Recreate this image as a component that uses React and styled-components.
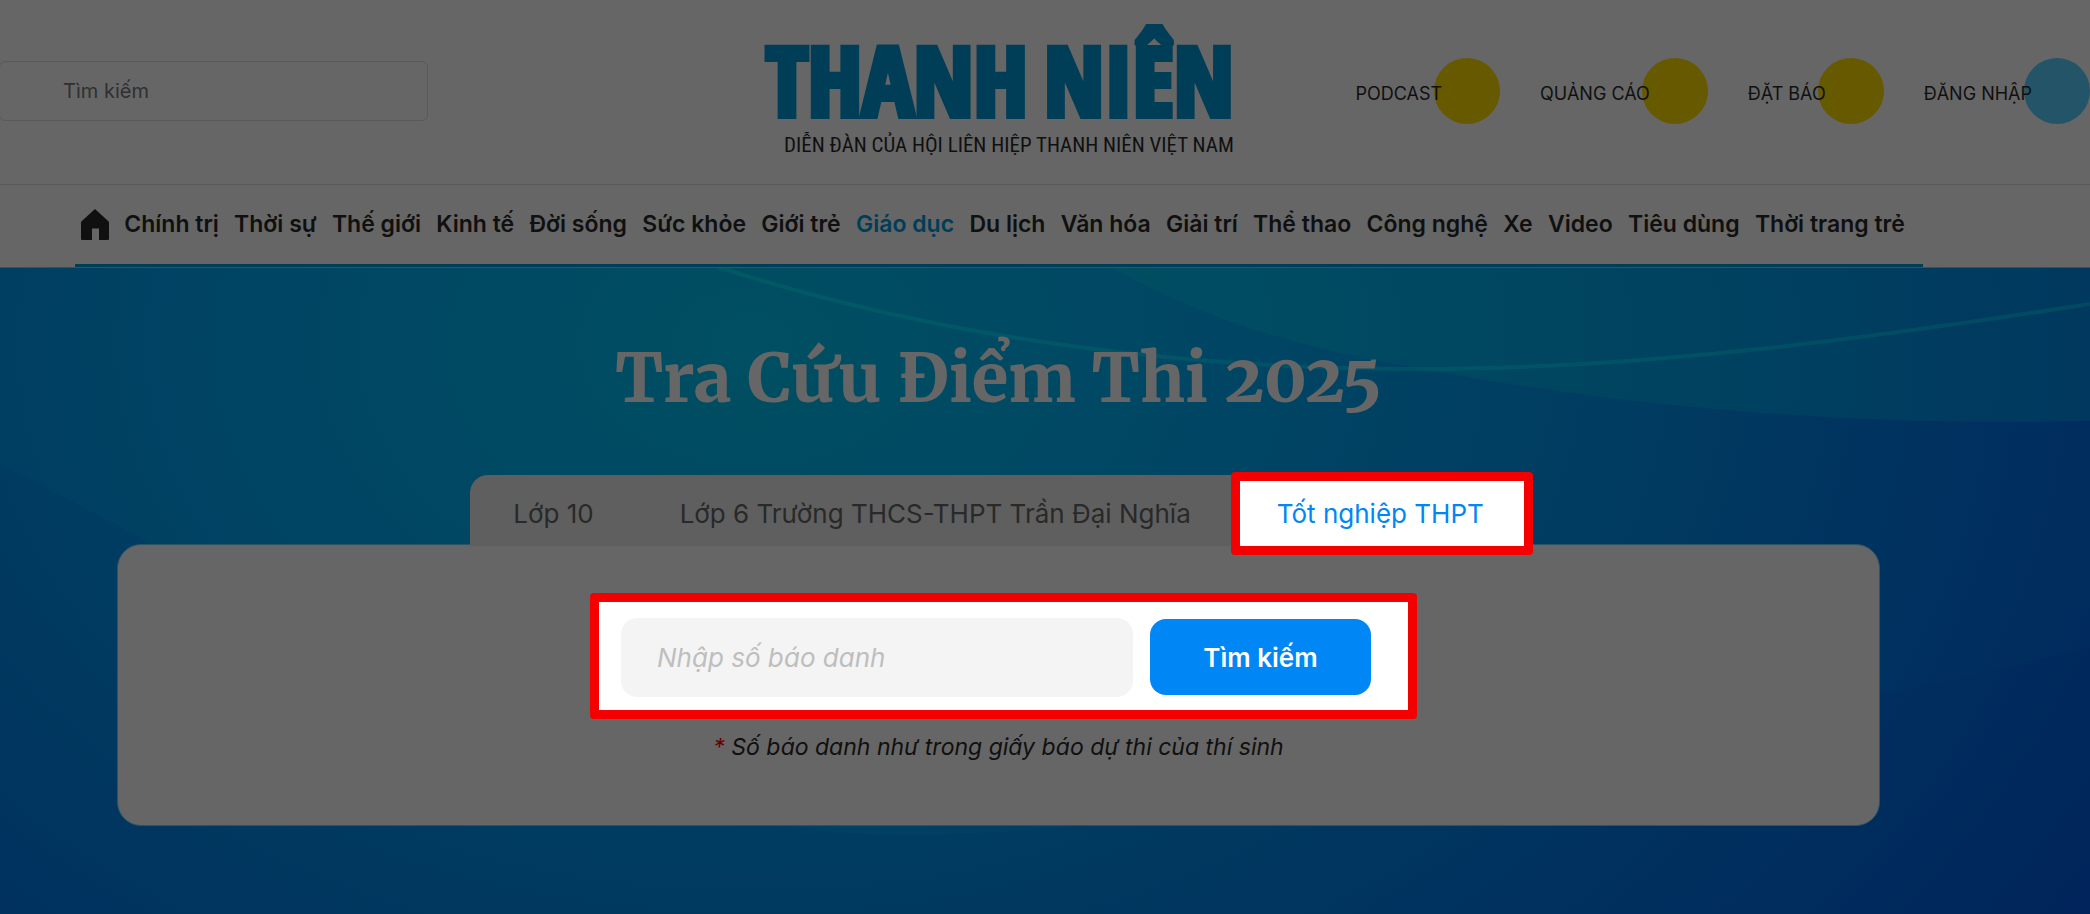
import React from 'react'
import styled, { createGlobalStyle } from 'styled-components'

const GlobalStyle = createGlobalStyle`
  * {
    box-sizing: border-box;
  }
  html,
  body,
  #root {
    height: 100%;
  }
  body {
    margin: 0;
    background: #666;
    color: #101010;
    font-family: Inter, 'Noto Sans', sans-serif;
  }
  button,
  input {
    font-family: inherit;
  }
`

const Page = styled.div`
  min-height: 100%;
  display: flex;
  flex-direction: column;
  overflow: hidden;
`

const Header = styled.header`
  display: grid;
  grid-template-columns: 1fr auto 1fr;
  align-items: center;
  height: 185px;
  padding-bottom: 2px;
  border-bottom: 1px solid #595959;
`

const SiteSearch = styled.input`
  width: 429px;
  max-width: 100%;
  height: 60px;
  margin: 0 0 0 -1px;
  padding: 0 20px 0 63px;
  border: 1px solid #595959;
  border-radius: 6px;
  background: transparent;
  font-size: 20px;
  color: #101010;
  &::placeholder {
    color: #303030;
    opacity: 1;
  }
  &:focus {
    outline: none;
  }
`

const Logo = styled.a`
  display: flex;
  flex-direction: column;
  align-items: flex-end;
  margin-right: 90px;
  padding-top: 8px;
  text-decoration: none;
  white-space: nowrap;
`

const Wordmark = styled.span`
  display: flex;
  gap: 16px;
  font-family: 'Open Sans Condensed', 'Roboto Condensed', sans-serif;
  font-size: 96px;
  line-height: 100px;
  font-weight: 800;
  color: #003d57;
  -webkit-text-stroke: 6px #003d57;
`

const Tagline = styled.span`
  font-family: 'Roboto Condensed', Roboto, sans-serif;
  font-size: 21px;
  line-height: 32px;
  color: #101010;
`

const QuickLinks = styled.div`
  display: flex;
  justify-content: flex-end;
  align-items: center;
  gap: 40px;
`

const QuickLink = styled.a`
  display: flex;
  align-items: center;
  font-size: 18px;
  line-height: 24px;
  color: #101010;
  text-decoration: none;
  white-space: nowrap;
  &::after {
    content: '';
    width: 66px;
    height: 66px;
    margin-left: -8px;
    border-radius: 50%;
    background: ${props => props.$color || '#665900'};
  }
  span {
    z-index: 1;
    padding-top: 6px;
  }
`

const NavWrap = styled.div`
  padding-right: 92px;
`

const Nav = styled.nav`
  display: flex;
  align-items: center;
  justify-content: space-between;
  max-width: 1848px;
  height: 82px;
  margin: 0 auto;
  padding: 0 18px 0 6px;
  border-bottom: 3px solid #003d57;
`

const HomeLink = styled.a`
  display: flex;
  color: #101010;
`

const NavLink = styled.a`
  padding-bottom: 2px;
  font-size: 23px;
  line-height: 32px;
  font-weight: 600;
  color: ${props => (props.$active ? '#003d57' : '#101010')};
  text-decoration: none;
  white-space: nowrap;
`

const Hero = styled.main`
  position: relative;
  flex: 1;
  display: flex;
  flex-direction: column;
  align-items: center;
  padding: 67px 210px 88px 117px;
  background: radial-gradient(
    ellipse 1560px 1100px at 36% 12%,
    #004f62 0%,
    #004664 30%,
    #003c61 55%,
    #002f5f 82%,
    #00255c 100%
  );
`

const Waves = styled.svg`
  position: absolute;
  inset: 0;
  width: 100%;
  height: 100%;
`

const Title = styled.h1`
  position: relative;
  margin: 0 0 53px;
  font-family: Merriweather, 'DejaVu Serif', serif;
  font-size: 67px;
  line-height: 88px;
  font-weight: 800;
  font-variant-numeric: oldstyle-nums;
  color: #666;
`

const Tabs = styled.div`
  position: relative;
  z-index: 1;
  display: flex;
  height: 71px;
  margin-bottom: -2px;
  border-radius: 18px 18px 0 0;
  background: #5f5f5f;
`

const Tab = styled.button`
  position: relative;
  padding: 6px 43px 0;
  border: none;
  background: none;
  font-size: 26px;
  line-height: 32px;
  color: ${props => (props.$active ? '#0087f5' : '#292929')};
  cursor: pointer;
`

const TabHighlight = styled.span`
  position: absolute;
  inset: -3px -6px -9px -3px;
  z-index: -1;
  border: 9px solid #f50000;
  border-radius: 4px;
  background: #fff;
`

const Panel = styled.section`
  position: relative;
  width: 100%;
  display: flex;
  flex-direction: column;
  align-items: center;
  padding: 48px 0 62px;
  border: 1px solid #2b5468;
  border-radius: 24px;
  background: #666;
`

const LookupForm = styled.form`
  display: flex;
  align-items: center;
  gap: 17px;
  height: 126px;
  margin-left: 10px;
  padding: 2px 37px 0 22px;
  border: 9px solid #f50000;
  border-radius: 4px;
  background: #fff;
`

const NumberInput = styled.input`
  width: 512px;
  height: 79px;
  padding: 0 36px;
  border: none;
  border-radius: 16px;
  background: #f4f4f4;
  font-size: 26px;
  &::placeholder {
    font-style: italic;
    color: #bebebe;
    opacity: 1;
  }
  &:focus {
    outline: none;
  }
`

const SearchButton = styled.button`
  width: 221px;
  height: 76px;
  border: none;
  border-radius: 16px;
  background: #0087f5;
  font-size: 26px;
  font-weight: 600;
  color: #fff;
  cursor: pointer;
`

const Note = styled.p`
  margin: 12px 0 0;
  font-size: 23px;
  line-height: 32px;
  font-style: italic;
`

const Star = styled.span`
  color: #660000;
`

const sections = [
  'Chính trị',
  'Thời sự',
  'Thế giới',
  'Kinh tế',
  'Đời sống',
  'Sức khỏe',
  'Giới trẻ',
  'Giáo dục',
  'Du lịch',
  'Văn hóa',
  'Giải trí',
  'Thể thao',
  'Công nghệ',
  'Xe',
  'Video',
  'Tiêu dùng',
  'Thời trang trẻ'
]

const quickLinks = [
  { label: 'PODCAST' },
  { label: 'QUẢNG CÁO' },
  { label: 'ĐẶT BÁO' },
  { label: 'ĐĂNG NHẬP', color: '#245467' }
]

const exams = [
  'Lớp 10',
  'Lớp 6 Trường THCS-THPT Trần Đại Nghĩa',
  'Tốt nghiệp THPT'
]

const HomeIcon = () => (
  <svg width="28" height="31" viewBox="0 0 28 31" aria-hidden="true">
    <path
      d="M14 0 27.4 12.2Q28 12.8 28 13.6V30Q28 31 27 31H18V19.5H11V31H1Q0 31 0 30V13.6Q0 12.8.6 12.2Z"
      fill="currentColor"
    />
  </svg>
)

const HeroWaves = () => (
  <Waves viewBox="0 0 2090 647" preserveAspectRatio="none" aria-hidden="true">
    <path
      d="M0 198C400 398 600 565 900 568S1880 433 2090 381V647H0Z"
      fill="#00205c"
      opacity=".12"
    />
    <path
      d="M1110 0C1210 55 1300 80 1400 98C1620 140 1850 160 2090 154V0Z"
      fill="#006a62"
      opacity=".19"
    />
    <path
      d="M718 0C950 75 1200 103 1430 102S1890 68 2090 37"
      fill="none"
      stroke="#008070"
      strokeWidth="4"
      opacity=".24"
    />
    <path d="M0 .5H2090" stroke="#1f5a70" />
  </Waves>
)

class ExamLookup extends React.Component {
  state = { exam: 2, number: '' }

  handleChange = e => this.setState({ number: e.target.value })

  render() {
    const { exam, number } = this.state
    return (
      <>
        <Tabs role="tablist">
          {exams.map((name, i) => (
            <Tab
              key={name}
              type="button"
              role="tab"
              aria-selected={i === exam}
              $active={i === exam}
              onClick={() => this.setState({ exam: i })}
            >
              {i === exam ? <TabHighlight /> : ''}
              {name}
            </Tab>
          ))}
        </Tabs>
        <Panel>
          <LookupForm onSubmit={e => e.preventDefault()}>
            <NumberInput
              aria-label="Số báo danh"
              placeholder="Nhập số báo danh"
              value={number}
              onChange={this.handleChange}
            />
            <SearchButton type="submit">Tìm kiếm</SearchButton>
          </LookupForm>
          <Note>
            <Star>*</Star> Số báo danh như trong giấy báo dự thi của thí sinh
          </Note>
        </Panel>
      </>
    )
  }
}

export default () => (
  <Page>
    <GlobalStyle />
    <Header>
      <SiteSearch type="search" aria-label="Tìm kiếm" placeholder="Tìm kiếm" />
      <Logo href="#">
        <Wordmark>
          <span>THANH</span>
          <span>NIÊN</span>
        </Wordmark>
        <Tagline>DIỄN ĐÀN CỦA HỘI LIÊN HIỆP THANH NIÊN VIỆT NAM</Tagline>
      </Logo>
      <QuickLinks>
        {quickLinks.map(({ label, color }) => (
          <QuickLink key={label} href="#" $color={color}>
            <span>{label}</span>
          </QuickLink>
        ))}
      </QuickLinks>
    </Header>
    <NavWrap>
      <Nav>
        <HomeLink href="#" aria-label="Trang chủ">
          <HomeIcon />
        </HomeLink>
        {sections.map(name => (
          <NavLink key={name} href="#" $active={name === 'Giáo dục'}>
            {name}
          </NavLink>
        ))}
      </Nav>
    </NavWrap>
    <Hero>
      <HeroWaves />
      <Title>Tra Cứu Điểm Thi 2025</Title>
      <ExamLookup />
    </Hero>
  </Page>
)
